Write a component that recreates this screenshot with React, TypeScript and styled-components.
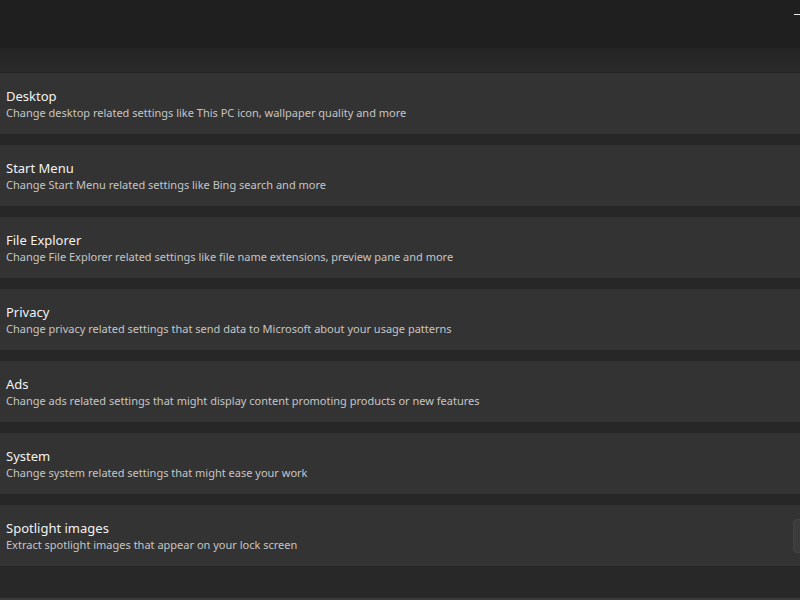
import styled, { createGlobalStyle } from "styled-components";

const GlobalStyle = createGlobalStyle`
  html, body {
    margin: 0;
    padding: 0;
    background: #282828;
  }
  body {
    font-family: "Noto Sans", "Open Sans", sans-serif;
    color: #ffffff;
  }
`;

const sections = [
  { title: "Desktop", description: "Change desktop related settings like This PC icon, wallpaper quality and more" },
  { title: "Start Menu", description: "Change Start Menu related settings like Bing search and more" },
  { title: "File Explorer", description: "Change File Explorer related settings like file name extensions, preview pane and more" },
  { title: "Privacy", description: "Change privacy related settings that send data to Microsoft about your usage patterns" },
  { title: "Ads", description: "Change ads related settings that might display content promoting products or new features" },
  { title: "System", description: "Change system related settings that might ease your work" },
  { title: "Spotlight images", description: "Extract spotlight images that appear on your lock screen", action: true },
];

export default function App() {
  return (
    <>
      <GlobalStyle />
      <SWindow>
        <STitleBar>
          <SMinimize />
        </STitleBar>
        <SSubHeader />
        <SList>
          {sections.map((s) => (
            <SCard key={s.title}>
              <STextBlock>
                <STitle>{s.title}</STitle>
                <SDescription>{s.description}</SDescription>
              </STextBlock>
              {s.action && <SEdgeButton />}
            </SCard>
          ))}
        </SList>
        <SFooter />
      </SWindow>
    </>
  );
}

const SWindow = styled.div`
  width: 800px;
  height: 600px;
  display: flex;
  flex-direction: column;
  background: #282828;
  overflow: hidden;
`;

const STitleBar = styled.div`
  height: 48px;
  background: #1f1f1f;
  display: flex;
  justify-content: flex-end;
  align-items: flex-start;
`;

const SMinimize = styled.div`
  width: 6px;
  height: 1px;
  margin-top: 14px;
  background: #e8e8e8;
`;

const SSubHeader = styled.div`
  height: 24px;
  background: linear-gradient(#242424, #2a2a2a);
  border-bottom: 1px solid #222222;
`;

const SList = styled.div`
  display: flex;
  flex-direction: column;
  gap: 10px;
  background: #272727;
`;

const SCard = styled.div`
  height: 62px;
  background: #333333;
  display: flex;
  align-items: center;
  justify-content: space-between;
  padding-left: 6px;
  padding-top: 1px;
  box-sizing: border-box;
  border-bottom: 1px solid #262626;
`;

const STextBlock = styled.div`
  display: flex;
  flex-direction: column;
`;

const STitle = styled.div`
  font-size: 13px;
  line-height: 18px;
  color: #f2f2f2;
`;

const SDescription = styled.div`
  font-size: 11px;
  line-height: 16px;
  color: #c5c5c5;
`;

const SEdgeButton = styled.div`
  width: 12px;
  height: 32px;
  margin-right: -7px;
  border-radius: 4px;
  background: #3b3b3b;
  border: 1px solid #444444;
`;

const SFooter = styled.div`
  flex: 1;
  background: #282828;
  border-bottom: 2px solid #3a3a3a;
`;
